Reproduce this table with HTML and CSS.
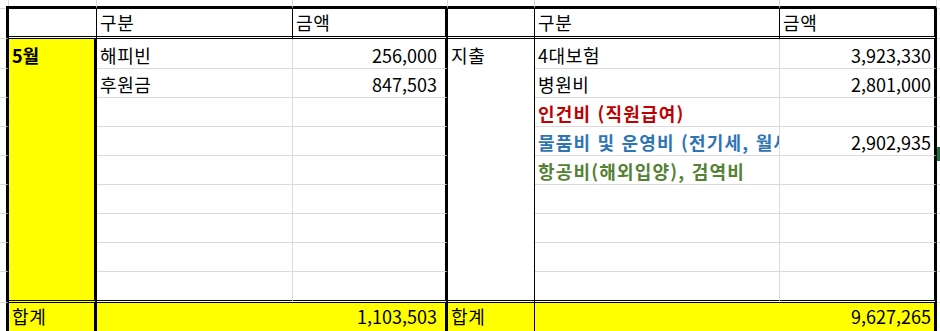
FILE: index.html
```html
<!DOCTYPE html>
<html lang="ko">
<head>
<meta charset="utf-8">
<title>5월 수입 지출</title>
<link rel="stylesheet" href="styles.css">
</head>
<body>
<div class="page">
  <div class="sheet">
    <!-- strip above the sheet -->
    <div class="c corner"></div>
    <div class="c top first"></div>
    <div class="c top"></div>
    <div class="c top"></div>
    <div class="c top"></div>
    <div class="c top"></div>
    <div class="c top"></div>
    <div class="c rs"></div>

    <!-- header -->
    <div class="c ls"></div>
    <div class="c hd"></div>
    <div class="c hd ko">구분</div>
    <div class="c hd thick ko">금액</div>
    <div class="c hd"></div>
    <div class="c hd ko">구분</div>
    <div class="c hd thick ko">금액</div>
    <div class="c rs"></div>

    <!-- row 1 -->
    <div class="c ls"></div>
    <div class="c merged yellow thick bold">5월</div>
    <div class="c ko">해피빈</div>
    <div class="c thick num numc">256,000</div>
    <div class="c merged thin ko">지출</div>
    <div class="c ko">4대보험</div>
    <div class="c thick num">3,923,330</div>
    <div class="c rs"></div>

    <!-- row 2 -->
    <div class="c ls"></div>
    <div class="c ko">후원금</div>
    <div class="c thick num numc">847,503</div>
    <div class="c ko">병원비</div>
    <div class="c thick num">2,801,000</div>
    <div class="c rs"></div>

    <!-- row 3 -->
    <div class="c ls"></div>
    <div class="c"></div>
    <div class="c thick"></div>
    <div class="c bold kob red">인건비 (직원급여)</div>
    <div class="c thick"></div>
    <div class="c rs"></div>

    <!-- row 4 -->
    <div class="c ls"></div>
    <div class="c"></div>
    <div class="c thick"></div>
    <div class="c bold kob blue">물품비 및 운영비 (전기세, 월세)</div>
    <div class="c thick num">2,902,935</div>
    <div class="c rs"></div>

    <!-- row 5 -->
    <div class="c ls"></div>
    <div class="c"></div>
    <div class="c thick"></div>
    <div class="c bold kob green">항공비(해외입양), 검역비</div>
    <div class="c thick"></div>
    <div class="c rs"></div>

    <!-- row 6 -->
    <div class="c ls"></div>
    <div class="c"></div>
    <div class="c thick"></div>
    <div class="c"></div>
    <div class="c thick"></div>
    <div class="c rs"></div>

    <!-- row 7 -->
    <div class="c ls"></div>
    <div class="c"></div>
    <div class="c thick"></div>
    <div class="c"></div>
    <div class="c thick"></div>
    <div class="c rs"></div>

    <!-- row 8 -->
    <div class="c ls"></div>
    <div class="c"></div>
    <div class="c thick"></div>
    <div class="c"></div>
    <div class="c thick"></div>
    <div class="c rs"></div>

    <!-- row 9 -->
    <div class="c ls"></div>
    <div class="c last"></div>
    <div class="c thick last"></div>
    <div class="c last"></div>
    <div class="c thick last"></div>
    <div class="c rs"></div>

    <!-- total -->
    <div class="c ls"></div>
    <div class="c sum yellow thick ko">합계</div>
    <div class="c sum yellow clear"></div>
    <div class="c sum yellow thick num numc">1,103,503</div>
    <div class="c sum yellow thin ko">합계</div>
    <div class="c sum yellow clear"></div>
    <div class="c sum yellow thick num">9,627,265</div>
    <div class="c rs"></div>
  </div>
  <div class="marker"></div>
</div>
</body>
</html>
```
FILE: styles.css
```css
html, body {
  margin: 0;
  padding: 0;
  background: #fff;
  overflow: hidden;
}

body {
  font-family: "Noto Sans CJK KR", "Noto Sans", sans-serif;
  font-size: 18px;
  color: #000;
}

.page {
  position: relative;
  width: 940px;
  height: 331px;
  overflow: hidden;
}

.sheet {
  display: grid;
  grid-template-columns: 9px 88px 196px 155px 87px 245px 157px 1fr;
  grid-template-rows: 9px 30px 30px repeat(7, 29px) 31px 32px;
}

.c {
  box-sizing: border-box;
  border-right: 1px solid #dadada;
  border-bottom: 1px solid #dadada;
  display: flex;
  align-items: flex-end;
  padding: 0 3px 2px 3px;
  line-height: 22px;
  white-space: nowrap;
  overflow: hidden;
  min-width: 0;
}

.ko {
  letter-spacing: 0.6px;
}

.kob {
  letter-spacing: 1.2px;
}

.top {
  border-bottom: 3px solid #000;
}

.first {
  margin-left: -3px;
}

.ls {
  border-right: 3px solid #000;
}

.rs {
  border-right: none;
}

.hd {
  border-right-color: #000;
  border-bottom: 3px double #000;
  padding-bottom: 3px;
}

.thick {
  border-right: 3px solid #000;
}

.thin {
  border-right: 1px solid #000;
}

.last {
  border-bottom: 3px double #000;
}

.merged {
  grid-row: span 9;
  border-bottom: 3px double #000;
  align-items: flex-start;
  padding-top: 5px;
}

.yellow {
  background: #ffff00;
}

.clear {
  border-right-color: transparent;
}

.sum {
  align-items: flex-start;
  padding-top: 2px;
  border-bottom: none;
}

.num {
  justify-content: flex-end;
}

.numc {
  padding-right: 8px;
}

.bold {
  font-weight: 700;
}

.red {
  color: #c00000;
}

.blue {
  color: #2e75b6;
}

.green {
  color: #548235;
}

.marker {
  position: absolute;
  left: 937px;
  top: 147px;
  width: 3px;
  height: 14px;
  background: #217346;
}
```
